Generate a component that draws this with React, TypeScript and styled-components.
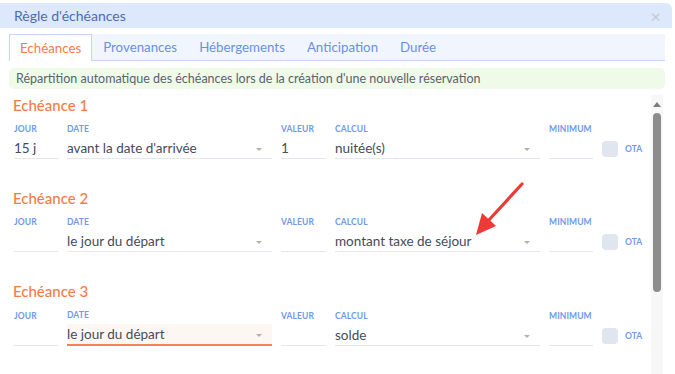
import React from 'react';
import styled, { createGlobalStyle } from 'styled-components';

const GlobalStyle = createGlobalStyle`
  body {
    margin: 0;
    background: #ffffff;
    font-family: "Lato", "Noto Sans", sans-serif;
  }
`;

const Dialog = styled.div`
  width: 672px;
  height: 371px;
  margin-top: 3px;
  display: flex;
  flex-direction: column;
  position: relative;
  overflow: hidden;
`;

const Header = styled.div`
  height: 25px;
  flex-shrink: 0;
  background: #dde8fc;
  border-radius: 0 6px 0 0;
  display: flex;
  align-items: center;
  justify-content: space-between;
  padding: 0 14px;
  color: #4e6bb4;
  font-size: 14px;
`;

const Close = styled.span`
  color: #c4c9d2;
  font-size: 18px;
  line-height: 1;
  margin-right: -3px;
`;

const Body = styled.div`
  flex: 1;
  display: flex;
  flex-direction: column;
  padding: 6px 7px 0 9px;
  min-height: 0;
`;

const TabBar = styled.div`
  height: 26px;
  display: flex;
  align-items: stretch;
  background: #f1f6fe;
  border-bottom: 1px solid #c7d6f6;
  flex-shrink: 0;
`;

const Tab = styled.div<{ $active?: boolean }>`
  display: flex;
  align-items: center;
  padding: 0 10px 1px;
  font-size: 13.3px;
  color: ${({ $active }) => ($active ? '#f47c4a' : '#6c8fe2')};
  background: ${({ $active }) => ($active ? '#ffffff' : 'transparent')};
  border: 1px solid ${({ $active }) => ($active ? '#c7d6f6' : 'transparent')};
  border-bottom: none;
  margin-bottom: ${({ $active }) => ($active ? '-1px' : '0')};
`;

const Info = styled.div`
  margin-top: 7px;
  height: 21px;
  flex-shrink: 0;
  background: #effbe8;
  border-radius: 5px;
  padding: 0 7px;
  display: flex;
  align-items: center;
  font-size: 12.5px;
  color: #5b6170;
`;

const ScrollArea = styled.div`
  flex: 1;
  display: flex;
  margin-top: 6px;
  min-height: 0;
`;

const Content = styled.div`
  flex: 1;
  padding: 0 0 0 5px;
`;

const Track = styled.div`
  width: 12px;
  margin-right: 2px;
  background: #f7f7f7;
  display: flex;
  flex-direction: column;
  align-items: center;
`;

const UpArrow = styled.div`
  margin-top: 7px;
  width: 0;
  height: 0;
  border-left: 4px solid transparent;
  border-right: 4px solid transparent;
  border-bottom: 5px solid #7c7c7c;
`;

const Thumb = styled.div`
  margin-top: 6px;
  width: 8px;
  height: 179px;
  border-radius: 4px;
  background: #8c8c8c;
`;

const Section = styled.section`
  margin-bottom: 29px;
`;

const Heading = styled.h3`
  margin: 0 0 9px -1px;
  font-size: 15px;
  font-weight: 500;
  line-height: 20px;
  color: #f47c48;
`;

const Grid = styled.div`
  display: grid;
  grid-template-columns: 44px 205px 45px 205px 44px auto;
  column-gap: 9px;
  align-items: end;
`;

const Field = styled.div``;

const Label = styled.div`
  font-size: 8.5px;
  font-weight: 700;
  letter-spacing: 0.1px;
  color: #7199ea;
  line-height: 10px;
  margin-bottom: 4px;
`;

const Input = styled.div<{ $focused?: boolean }>`
  height: 20px;
  display: flex;
  align-items: center;
  justify-content: space-between;
  font-size: 13.5px;
  color: #454b5a;
  border-bottom: ${({ $focused }) => ($focused ? '2px solid #f5834f' : '1px solid #e4e7eb')};
  background: ${({ $focused }) => ($focused ? '#fdf7f4' : 'transparent')};
  padding-right: 10px;
`;

const Caret = styled.span`
  width: 0;
  height: 0;
  border-left: 3px solid transparent;
  border-right: 3px solid transparent;
  border-top: 3px solid #bdaea6;
  margin-top: 2px;
`;

const Ota = styled.label`
  display: flex;
  align-items: center;
  gap: 7px;
  height: 20px;
  font-size: 8.5px;
  font-weight: 700;
  color: #7199ea;
`;

const Box = styled.span`
  width: 16px;
  height: 16px;
  border-radius: 4px;
  background: #dfe6f0;
`;

const Arrow = styled.svg`
  position: absolute;
  left: 470px;
  top: 172px;
`;

type Row = {
  title: string;
  jour: string;
  date: string;
  valeur: string;
  calcul: string;
  focused?: boolean;
};

const rows: Row[] = [
  { title: 'Echéance 1', jour: '15 j', date: "avant la date d'arrivée", valeur: '1', calcul: 'nuitée(s)' },
  { title: 'Echéance 2', jour: '', date: 'le jour du départ', valeur: '', calcul: 'montant taxe de séjour' },
  { title: 'Echéance 3', jour: '', date: 'le jour du départ', valeur: '', calcul: 'solde', focused: true },
];

const tabs = ['Echéances', 'Provenances', 'Hébergements', 'Anticipation', 'Durée'];

export default function App() {
  return (
    <>
      <GlobalStyle />
      <Dialog>
        <Header>
          <span>Règle d'échéances</span>
          <Close>×</Close>
        </Header>
        <Body>
          <TabBar>
            {tabs.map((t, i) => (
              <Tab key={t} $active={i === 0}>{t}</Tab>
            ))}
          </TabBar>
          <Info>Répartition automatique des échéances lors de la création d'une nouvelle réservation</Info>
          <ScrollArea>
            <Content>
              {rows.map((r) => (
                <Section key={r.title}>
                  <Heading>{r.title}</Heading>
                  <Grid>
                    <Field>
                      <Label>JOUR</Label>
                      <Input>{r.jour}</Input>
                    </Field>
                    <Field>
                      <Label>DATE</Label>
                      <Input $focused={r.focused}>{r.date}<Caret /></Input>
                    </Field>
                    <Field>
                      <Label>VALEUR</Label>
                      <Input>{r.valeur}</Input>
                    </Field>
                    <Field>
                      <Label>CALCUL</Label>
                      <Input>{r.calcul}<Caret /></Input>
                    </Field>
                    <Field>
                      <Label>MINIMUM</Label>
                      <Input />
                    </Field>
                    <Ota><Box />OTA</Ota>
                  </Grid>
                </Section>
              ))}
            </Content>
            <Track>
              <UpArrow />
              <Thumb />
            </Track>
          </ScrollArea>
        </Body>
        <Arrow width="60" height="64" viewBox="0 0 60 64">
          <line x1="52" y1="9" x2="18" y2="46" stroke="#ee3a36" strokeWidth="3.2" strokeLinecap="round" />
          <polygon points="6,60 12,38 26,51" fill="#ee3a36" />
        </Arrow>
      </Dialog>
    </>
  );
}
